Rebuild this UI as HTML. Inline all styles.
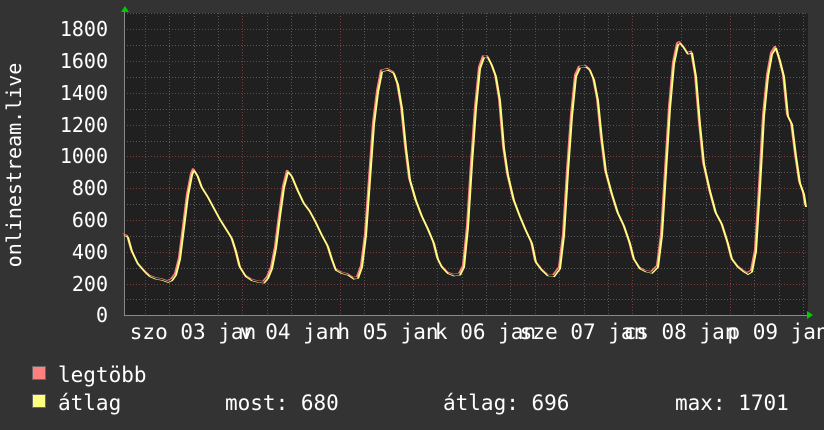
<!DOCTYPE html>
<html><head><meta charset="utf-8"><style>
html,body{margin:0;padding:0;background:#333;}
svg{display:block;font-family:"DejaVu Sans Mono","Liberation Mono",monospace;}
</style></head><body>
<svg width="824" height="430" viewBox="0 0 824 430" xmlns="http://www.w3.org/2000/svg">
<rect width="824" height="430" fill="#333"/>
<rect x="124" y="13" width="684" height="302" fill="#202020"/>
<g stroke="#5a5a5a" stroke-width="1" stroke-dasharray="1,2">
<line x1="124" y1="45.5" x2="808" y2="45.5"/><line x1="124" y1="77.5" x2="808" y2="77.5"/><line x1="124" y1="109.5" x2="808" y2="109.5"/><line x1="124" y1="141.5" x2="808" y2="141.5"/><line x1="124" y1="172.5" x2="808" y2="172.5"/><line x1="124" y1="204.5" x2="808" y2="204.5"/><line x1="124" y1="236.5" x2="808" y2="236.5"/><line x1="124" y1="268.5" x2="808" y2="268.5"/><line x1="124" y1="299.5" x2="808" y2="299.5"/><line x1="124" y1="13.5" x2="808" y2="13.5"/>
<line x1="169.5" y1="13" x2="169.5" y2="315"/><line x1="194.5" y1="13" x2="194.5" y2="315"/><line x1="218.5" y1="13" x2="218.5" y2="315"/>
<line x1="267.5" y1="13" x2="267.5" y2="315"/><line x1="291.5" y1="13" x2="291.5" y2="315"/><line x1="315.5" y1="13" x2="315.5" y2="315"/>
<line x1="364.5" y1="13" x2="364.5" y2="315"/><line x1="389.5" y1="13" x2="389.5" y2="315"/><line x1="413.5" y1="13" x2="413.5" y2="315"/>
<line x1="462.5" y1="13" x2="462.5" y2="315"/><line x1="486.5" y1="13" x2="486.5" y2="315"/><line x1="510.5" y1="13" x2="510.5" y2="315"/>
<line x1="559.5" y1="13" x2="559.5" y2="315"/><line x1="584.5" y1="13" x2="584.5" y2="315"/><line x1="608.5" y1="13" x2="608.5" y2="315"/>
<line x1="657.5" y1="13" x2="657.5" y2="315"/><line x1="681.5" y1="13" x2="681.5" y2="315"/><line x1="706.5" y1="13" x2="706.5" y2="315"/>
<line x1="754.5" y1="13" x2="754.5" y2="315"/><line x1="779.5" y1="13" x2="779.5" y2="315"/><line x1="803.5" y1="13" x2="803.5" y2="315"/>
</g>
<g stroke="#7a3c3c" stroke-width="1" stroke-dasharray="1,2">
<line x1="124" y1="29.5" x2="808" y2="29.5"/><line x1="124" y1="61.5" x2="808" y2="61.5"/><line x1="124" y1="93.5" x2="808" y2="93.5"/><line x1="124" y1="125.5" x2="808" y2="125.5"/><line x1="124" y1="156.5" x2="808" y2="156.5"/><line x1="124" y1="188.5" x2="808" y2="188.5"/><line x1="124" y1="220.5" x2="808" y2="220.5"/><line x1="124" y1="252.5" x2="808" y2="252.5"/><line x1="124" y1="284.5" x2="808" y2="284.5"/>
<line x1="145.5" y1="13" x2="145.5" y2="315"/><line x1="242.5" y1="13" x2="242.5" y2="315"/><line x1="340.5" y1="13" x2="340.5" y2="315"/><line x1="437.5" y1="13" x2="437.5" y2="315"/><line x1="535.5" y1="13" x2="535.5" y2="315"/><line x1="632.5" y1="13" x2="632.5" y2="315"/><line x1="730.5" y1="13" x2="730.5" y2="315"/>
</g>
<line x1="124" y1="315.5" x2="810" y2="315.5" stroke="#888"/>
<line x1="124.5" y1="10" x2="124.5" y2="316" stroke="#888"/>
<polygon points="121,12 125,6 129,12" fill="#0c0"/>
<polygon points="807,311 813,315 807,319" fill="#0c0"/>
<defs><polyline id="d" fill="none" points="124,500 128,490 132,400 138,320 145,270 150,240 156,225 162,218 168,205 172,215 176,250 180,350 184,550 188,750 192,880 194,910 198,870 202,800 208,740 214,670 220,600 226,540 232,480 236,400 240,300 246,240 252,215 258,205 264,200 268,230 272,290 276,420 280,620 284,800 288,900 292,870 298,780 304,700 310,650 316,580 322,500 328,430 332,350 336,280 342,260 348,250 354,225 358,230 362,300 366,500 370,850 374,1200 378,1400 382,1530 388,1540 394,1520 398,1450 402,1300 406,1050 410,850 416,720 422,620 428,540 434,450 438,350 442,300 448,260 454,245 460,250 464,300 468,550 472,950 476,1300 480,1550 484,1620 488,1620 492,1570 496,1500 500,1350 504,1050 508,880 514,720 520,620 526,530 532,450 536,330 542,280 548,245 554,240 560,290 564,500 568,900 572,1250 576,1500 580,1555 586,1560 590,1540 594,1480 598,1350 602,1100 606,900 612,760 618,640 624,560 630,450 634,350 640,290 646,270 652,262 658,300 662,500 666,900 670,1300 674,1580 678,1700 680,1710 684,1680 688,1640 692,1650 696,1500 700,1200 704,950 710,780 716,640 722,570 728,450 732,350 738,300 744,270 748,255 752,270 756,400 760,800 764,1250 768,1500 772,1640 776,1680 780,1600 784,1500 788,1250 792,1200 796,1000 800,830 804,760 806,680"/></defs>
<g transform="translate(-1,313) scale(1,-0.1589)"><use href="#d" stroke="#ff8080" stroke-width="2" vector-effect="non-scaling-stroke" style="vector-effect:non-scaling-stroke"/></g>
<g transform="translate(0,315) scale(1,-0.1589)"><use href="#d" stroke="#ffff80" stroke-width="2" vector-effect="non-scaling-stroke" style="vector-effect:non-scaling-stroke"/></g>
<g fill="#fff" font-size="20" text-anchor="end">
<text x="108" y="36">1800</text><text x="108" y="68">1600</text><text x="108" y="100">1400</text><text x="108" y="132">1200</text><text x="108" y="163">1000</text><text x="108" y="195">800</text><text x="108" y="227">600</text><text x="108" y="259">400</text><text x="108" y="291">200</text><text x="108" y="322">0</text>
</g>
<text transform="translate(21,165) rotate(-90)" fill="#fff" font-size="20" text-anchor="middle">onlinestream.live</text>
<g fill="#fff" font-size="21" text-anchor="middle" xml:space="preserve">
<text x="193" y="339">szo 03 jan</text><text x="290.5" y="339">v 04 jan</text><text x="388" y="339">h 05 jan</text><text x="485.5" y="339">k 06 jan</text><text x="583" y="339">sze 07 jan</text><text x="680.5" y="339">cs 08 jan</text><text x="778" y="339">p 09 jan</text>
</g>
<rect x="32.5" y="366.5" width="13" height="13" fill="#ff8080" stroke="#666"/>
<rect x="32.5" y="394.5" width="13" height="13" fill="#ffff80" stroke="#666"/>
<g fill="#fff" font-size="21" xml:space="preserve">
<text x="58" y="382">legtöbb</text>
<text x="58" y="410">átlag</text>
<text x="225" y="410">most: 680</text>
<text x="443" y="410">átlag: 696</text>
<text x="675" y="410">max: 1701</text>
</g>
</svg>
</body></html>
